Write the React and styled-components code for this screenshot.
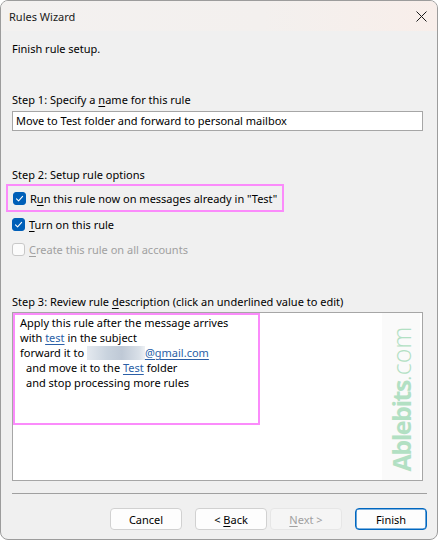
import React from "react";
import styled, { createGlobalStyle } from "styled-components";

const Global = createGlobalStyle`
  html, body { margin: 0; padding: 0; background: #ffffff; }
  body { font-family: "Noto Sans", "Liberation Sans", sans-serif; font-size: 11px; color: #000; }
  * { box-sizing: border-box; }
`;

const Window = styled.div`
  width: 438px;
  height: 540px;
  border: 1px solid #9c9c9c;
  border-radius: 8px;
  overflow: hidden;
  background: #f0f0f0;
  display: flex;
  flex-direction: column;
`;

const TitleBar = styled.div`
  height: 30px;
  flex: none;
  display: flex;
  align-items: center;
  justify-content: space-between;
  padding: 0 10px 0 8px;
  background: linear-gradient(90deg, #f3f1f0 0%, #f3f0ee 60%, #f8eeea 100%);
`;

const Title = styled.span`
  color: #1a1a1a;
`;

const Body = styled.div`
  flex: 1;
  display: flex;
  flex-direction: column;
  padding: 0 14px 0 11px;
`;

const Label = styled.div`
  height: 16px;
  line-height: 16px;
  margin-top: ${(p) => p.$mt || 0}px;
  white-space: nowrap;
`;

const TextInput = styled.div`
  margin-top: 3px;
  height: 20px;
  background: #fff;
  border: 1px solid #a6a6a6;
  padding: 0 0 0 3px;
  line-height: 18px;
  white-space: nowrap;
`;

const Highlight = styled.div`
  margin-top: ${(p) => p.$mt || 0}px;
  margin-left: -6px;
  width: 278px;
  height: 28px;
  border: 2px solid #fb8bfb;
  display: flex;
  align-items: center;
  padding-left: 5px;
`;

const CheckRow = styled.div`
  display: flex;
  align-items: center;
  height: 16px;
  gap: 4px;
  margin-top: ${(p) => p.$mt || 0}px;
  color: ${(p) => (p.$disabled ? "#a0a0a0" : "#000")};
  white-space: nowrap;
`;

const Box = styled.span`
  width: 13px;
  height: 13px;
  border-radius: 3px;
  flex: none;
  display: inline-flex;
  align-items: center;
  justify-content: center;
  background: ${(p) => (p.$checked ? "#005fb8" : "#fbfbfb")};
  border: 1px solid ${(p) => (p.$checked ? "#005fb8" : "#c8c8c8")};
`;

const U = styled.span`
  text-decoration: underline;
  text-underline-offset: 2px;
`;

const DescBox = styled.div`
  position: relative;
  margin-top: 2px;
  height: 169px;
  background: #fff;
  border: 1px solid #a6a6a6;
  padding: 0;
`;

const DescHighlight = styled.div`
  position: relative;
  width: 247px;
  height: 112px;
  border: 2px solid #fb8bfb;
  padding: 0 0 0 5px;
`;

const Line = styled.div`
  height: 15px;
  line-height: 15px;
  padding-left: ${(p) => (p.$indent ? 6 : 0)}px;
  white-space: nowrap;
`;

const Link = styled.span`
  color: #2b5fa7;
  text-decoration: underline;
  text-underline-offset: 2px;
`;

const Redacted = styled.span`
  display: inline-block;
  width: 58px;
  height: 14px;
  vertical-align: -3px;
  background: linear-gradient(90deg, #e4e9ef 0%, #c9d3de 35%, #bfc9d6 60%, #d9e0e8 90%, #eef1f4 100%);
`;

const WatermarkStripe = styled.div`
  position: absolute;
  top: 0;
  bottom: 0;
  left: 369px;
  width: 38px;
  background: #fafafa;
`;

const Watermark = styled.div`
  position: absolute;
  left: 388px;
  top: 86px;
  line-height: 25px;
  transform: translate(-50%, -50%) rotate(-90deg);
  font-family: "Open Sans", "Noto Sans", sans-serif;
  font-size: 25px;
  color: #b2e0c3;
  white-space: nowrap;
`;

const Strong = styled.span`
  font-weight: 700;
  letter-spacing: -1.5px;
`;

const Light = styled.span`
  font-weight: 300;
`;

const Separator = styled.div`
  margin-top: 12px;
  margin-right: -4px;
  height: 1px;
  background: #a0a0a0;
`;

const ButtonBar = styled.div`
  margin-top: 14px;
  margin-right: -4px;
  display: flex;
  justify-content: flex-end;
`;

const Button = styled.div`
  width: 72px;
  height: 22px;
  margin-left: ${(p) => p.$ml || 0}px;
  display: flex;
  align-items: center;
  justify-content: center;
  white-space: pre;
  border-radius: 4px;
  background: ${(p) => (p.$disabled ? "#f5f5f5" : "#fdfdfd")};
  border: 1px solid ${(p) => (p.$primary ? "#0067c0" : p.$disabled ? "#e6e6e6" : "#d1d1d1")};
  box-shadow: ${(p) => (p.$primary ? "inset 0 0 0 0.6px #0067c0" : "none")};
  color: ${(p) => (p.$disabled ? "#a0a0a0" : "#000")};
`;

const Check = () => (
  <svg width="9" height="9" viewBox="0 0 9 9">
    <path d="M1.5 4.8 L3.6 6.8 L7.6 2.4" fill="none" stroke="#fff" strokeWidth="1.1" strokeLinecap="round" strokeLinejoin="round" />
  </svg>
);

const CloseIcon = () => (
  <svg width="11" height="11" viewBox="0 0 11 11">
    <path d="M0.5 0.5 L10.5 10.5 M10.5 0.5 L0.5 10.5" stroke="#1a1a1a" strokeWidth="1" />
  </svg>
);

export default function App() {
  return (
    <>
      <Global />
      <Window>
        <TitleBar>
          <Title>Rules Wizard</Title>
          <CloseIcon />
        </TitleBar>
        <Body>
          <Label $mt={10}>Finish rule setup.</Label>
          <Label $mt={35}>
            Step 1: Specify a <U>n</U>ame for this rule
          </Label>
          <TextInput>Move to Test folder and forward to personal mailbox</TextInput>
          <Label $mt={36}>Step 2: Setup rule options</Label>
          <Highlight $mt={1}>
            <CheckRow>
              <Box $checked><Check /></Box>
              <span>R<U>u</U>n this rule now on messages already in "Test"</span>
            </CheckRow>
          </Highlight>
          <CheckRow $mt={4}>
            <Box $checked><Check /></Box>
            <span><U>T</U>urn on this rule</span>
          </CheckRow>
          <CheckRow $mt={9} $disabled>
            <Box />
            <span><U>C</U>reate this rule on all accounts</span>
          </CheckRow>
          <Label $mt={37}>
            Step 3: Review rule <U>d</U>escription (click an underlined value to edit)
          </Label>
          <DescBox>
            <WatermarkStripe />
            <DescHighlight>
              <Line>Apply this rule after the message arrives</Line>
              <Line>with <Link>test</Link> in the subject</Line>
              <Line>forward it to <Redacted /><Link>@gmail.com</Link></Line>
              <Line $indent>and move it to the <Link>Test</Link> folder</Line>
              <Line $indent>and stop processing more rules</Line>
            </DescHighlight>
            <Watermark>
              <Strong>Ablebits</Strong><Light>.com</Light>
            </Watermark>
          </DescBox>
          <Separator />
          <ButtonBar>
            <Button>Cancel</Button>
            <Button $ml={13}>{"< "}<U>B</U>ack</Button>
            <Button $ml={3} $disabled><U>N</U>{"ext >"}</Button>
            <Button $ml={13} $primary>Finish</Button>
          </ButtonBar>
        </Body>
      </Window>
    </>
  );
}
